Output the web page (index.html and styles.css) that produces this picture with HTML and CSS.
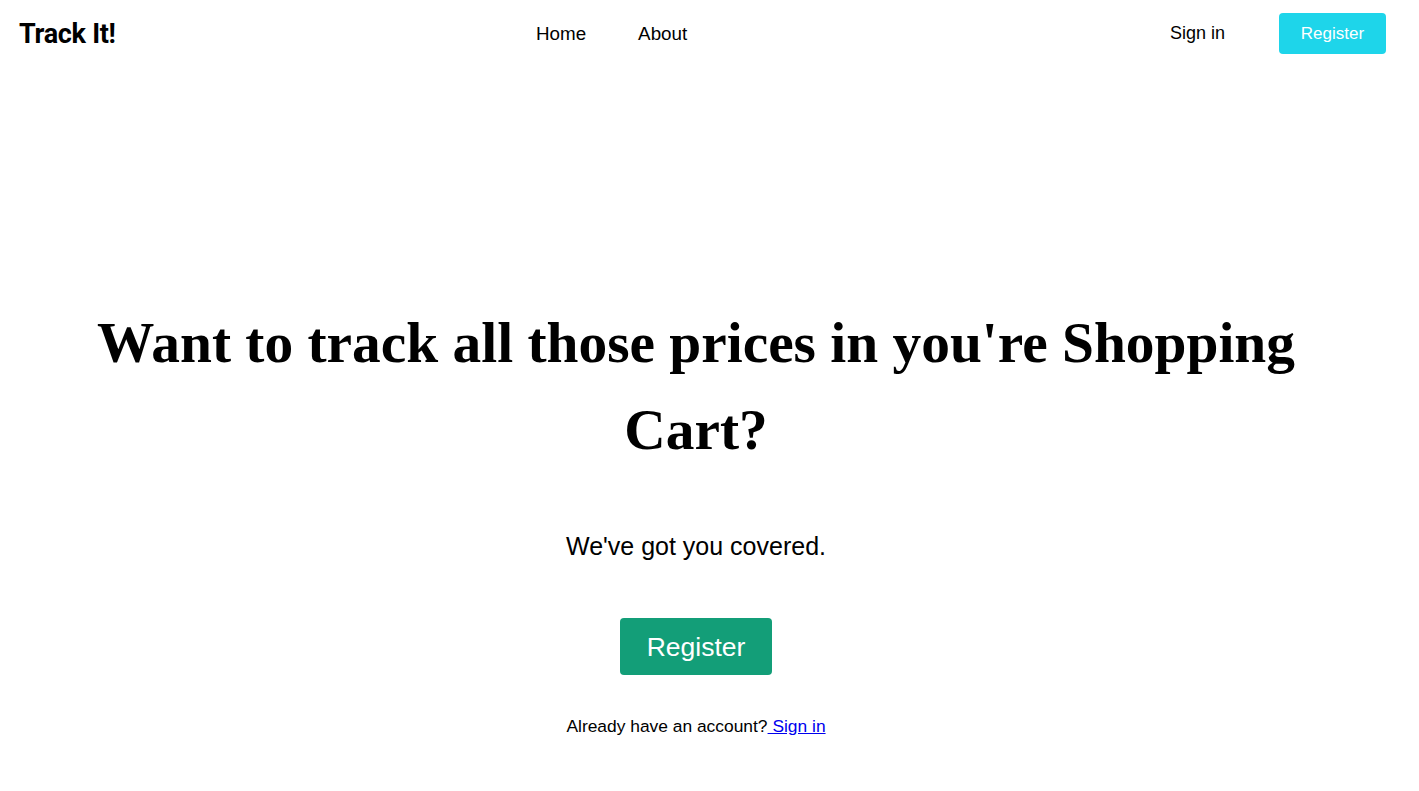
FILE: index.html
```html
<!DOCTYPE html>
<html>
<head>
<meta charset="utf-8">
<title>Track It!</title>
<link rel="stylesheet" href="styles.css">
</head>
<body>
<header class="nav">
  <div class="logo">Track It!</div>
  <nav class="links">
    <a class="link" href="#">Home</a>
    <a class="link" href="#">About</a>
  </nav>
  <div class="auth">
    <a class="signin" href="#">Sign in</a>
    <a class="btn-info" href="#">Register</a>
  </div>
</header>
<main class="hero">
  <h1 class="title">Want to track all those prices in you're Shopping Cart?</h1>
  <p class="lead">We've got you covered.</p>
  <a class="btn-green" href="#">Register</a>
  <p class="small">Already have an account?<a class="blue" href="#"> Sign in</a></p>
</main>
</body>
</html>
```
FILE: styles.css
```css
* { box-sizing: border-box; }
html, body { margin: 0; padding: 0; background: #fff; }
body { font-family: "Liberation Sans", Arial, sans-serif; color: #000; width: 1392px; }
.nav { display: flex; align-items: center; height: 66px; padding: 0 6px 0 19px; position: relative; }
.logo { font-family: Roboto, sans-serif; font-weight: 700; font-size: 27px; letter-spacing: -0.3px; flex: 1; margin-top: 2px; }
.links { display: flex; gap: 52px; position: absolute; left: 536px; top: 23px; }
.link { color: #000; text-decoration: none; font-size: 18.8px; }
.auth { display: flex; align-items: center; }
.signin { color: #000; text-decoration: none; font-size: 18px; margin-right: 54px; padding-top: 1px; }
.btn-info { background: #1ed5ea; color: #fff; text-decoration: none; font-size: 17px; width: 107px; height: 41px; padding-top: 2px; border-radius: 4px; display: flex; align-items: center; justify-content: center; }
.hero { display: flex; flex-direction: column; align-items: center; text-align: center; padding-top: 233px; }
.title { font-family: "Liberation Serif", serif; font-weight: 700; font-size: 57.4px; line-height: 87px; margin: 0 90px; }
.lead { font-size: 25px; margin: 59px 0 0; }
.btn-green { margin-top: 57px; background: #139e78; color: #fff; text-decoration: none; font-size: 26.5px; width: 152px; height: 57px; padding-top: 2px; border-radius: 4px; display: flex; align-items: center; justify-content: center; }
.small { font-size: 17.4px; margin: 41px 0 0; }
.blue { color: #0000ee; text-decoration: underline; }
```
